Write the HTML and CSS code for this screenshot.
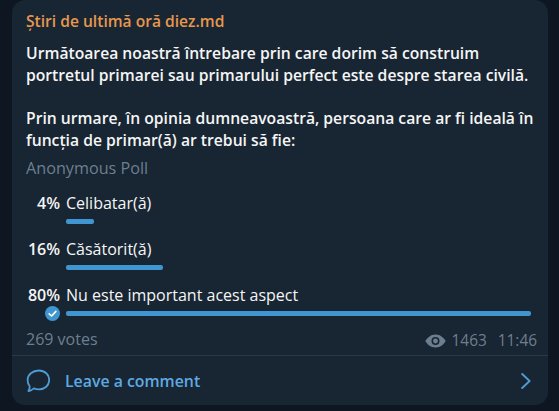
FILE: index.html
```html
<!DOCTYPE html>
<html lang="ro">
<head>
    <meta charset="UTF-8">
    <title>Știri de ultimă oră diez.md</title>
    <link rel="stylesheet" href="styles.css">
</head>
<body>
    <div class="message">
        <div class="message-body">
            <div class="sender">Știri de ultimă oră diez.md</div>
            <p class="question">Următoarea noastră întrebare prin care dorim să construim<br>portretul primarei sau primarului perfect este despre starea civilă.</p>
            <p class="question">Prin urmare, în opinia dumneavoastră, persoana care ar fi ideală în<br>funcția de primar(ă) ar trebui să fie:</p>
            <div class="poll-type">Anonymous Poll</div>
            <div class="poll-options">
                <div class="option">
                    <div class="percent">4%</div>
                    <div class="option-main">
                        <div class="option-label">Celibatar(ă)</div>
                        <div class="bar" style="width: 28px"></div>
                    </div>
                </div>
                <div class="option">
                    <div class="percent">16%</div>
                    <div class="option-main">
                        <div class="option-label">Căsătorit(ă)</div>
                        <div class="bar" style="width: 97px"></div>
                    </div>
                </div>
                <div class="option">
                    <div class="percent">80%</div>
                    <div class="option-main">
                        <div class="option-label">Nu este important acest aspect</div>
                        <div class="bar" style="width: 465px"></div>
                    </div>
                    <svg class="chosen" width="15" height="15" viewBox="0 0 15 15">
                        <circle cx="7.5" cy="7.5" r="7.5" fill="#3f96d0"/>
                        <path d="M4.2 7.8 L6.6 10 L10.9 5.4" fill="none" stroke="#fff" stroke-width="1.6" stroke-linecap="round" stroke-linejoin="round"/>
                    </svg>
                </div>
            </div>
            <div class="poll-footer">
                <span class="votes">269 votes</span>
                <span class="meta">
                    <svg class="eye" width="21" height="14" viewBox="0 0 21 14">
                        <path d="M10.5 0.5 C5.5 0.5 2 4 0.4 7 C2 10 5.5 13.5 10.5 13.5 C15.5 13.5 19 10 20.6 7 C19 4 15.5 0.5 10.5 0.5 Z" fill="#6d7f8f"/>
                        <circle cx="10.5" cy="7" r="4" fill="#182533"/>
                        <circle cx="10.5" cy="7" r="2.4" fill="#6d7f8f"/>
                    </svg>
                    <span class="views">1463</span>
                    <span>11:46</span>
                </span>
            </div>
        </div>
        <div class="comment-row">
            <svg class="comment-icon" width="24" height="24" viewBox="0 0 24 24">
                <path d="M12.8 1.5 C19 1.5 23.2 5.7 23.2 11 C23.2 16.4 18.8 20.4 12.8 20.4 C10.8 20.4 9.2 20 7.8 19.4 C6.3 20.6 4.2 22.4 2.4 22 C3.4 20.6 3.9 18.9 3.6 17 C2.2 15.4 1.6 13.3 1.6 11 C1.6 5.7 6.6 1.5 12.8 1.5 Z" fill="none" stroke="#4f9bd3" stroke-width="1.8" stroke-linejoin="round"/>
            </svg>
            <span class="comment-text">Leave a comment</span>
            <svg class="chevron" width="10" height="16" viewBox="0 0 10 16">
                <path d="M1.2 1 L8.6 8 L1.2 15" fill="none" stroke="#4f9bd3" stroke-width="1.9" stroke-linecap="round" stroke-linejoin="round"/>
            </svg>
        </div>
    </div>
</body>
</html>
```

FILE: styles.css
```css
html, body {
    margin: 0;
    padding: 0;
}

body {
    width: 559px;
    height: 411px;
    overflow: hidden;
    background-color: #0e1621;
    font-family: "Open Sans", sans-serif;
}

.message {
    margin-left: 12px;
    width: 536px;
    height: 405px;
    background-color: #182533;
    border-radius: 13px;
    display: flex;
    flex-direction: column;
}

.message-body {
    padding: 10px 14px 0 14px;
    flex-grow: 1;
}

.sender {
    color: #e7974e;
    font-size: 15.6px;
    font-weight: 600;
    line-height: 22px;
}

.question {
    margin: 10px 0 21px 0;
    color: #f5f5f5;
    font-size: 15.7px;
    font-weight: 600;
    line-height: 22px;
    white-space: nowrap;
}

.question + .question {
    margin-top: 0;
    margin-bottom: 6px;
}

.poll-type {
    color: #6d7f8f;
    font-size: 16.2px;
    line-height: 22px;
}

.poll-options {
    margin-top: 13px;
    display: flex;
    flex-direction: column;
    gap: 14px;
}

.option {
    display: flex;
    position: relative;
    margin-left: -14px;
}

.percent {
    width: 48px;
    padding-right: 6px;
    text-align: right;
    color: #f5f5f5;
    font-size: 16px;
    font-weight: 600;
    line-height: 22px;
}

.option-main {
    flex-grow: 1;
}

.option-label {
    color: #f5f5f5;
    font-size: 16px;
    line-height: 22px;
}

.bar {
    margin-top: 5px;
    height: 5px;
    border-radius: 2px;
    background-color: #3f96d0;
}

.chosen {
    position: absolute;
    left: 33px;
    top: 22px;
}

.poll-footer {
    margin-top: 12px;
    display: flex;
    justify-content: space-between;
    align-items: flex-start;
    color: #6d7f8f;
    font-size: 16px;
    line-height: 22px;
}

.meta {
    display: flex;
    align-items: center;
    margin-right: -3px;
    margin-top: 2px;
    font-size: 15.4px;
}

.eye {
    margin-right: 6px;
}

.views {
    margin-right: 11px;
}

.comment-row {
    height: 50px;
    box-sizing: border-box;
    border-top: 1px solid #2a3744;
    display: flex;
    align-items: center;
    padding: 0 17px 0 14px;
}

.comment-text {
    margin-left: 15px;
    flex-grow: 1;
    color: #5eaae2;
    font-size: 15.85px;
    font-weight: 600;
}
```
